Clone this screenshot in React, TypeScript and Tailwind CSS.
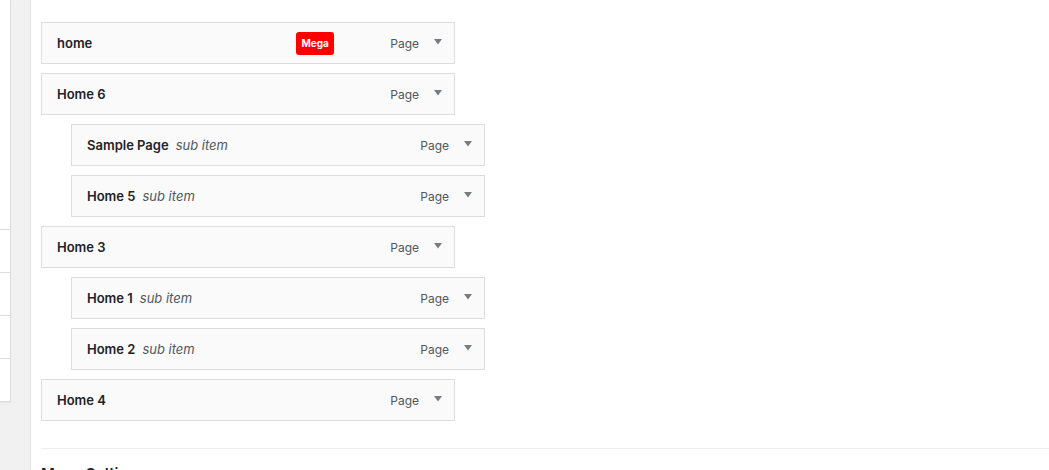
type MenuItem = {
  title: string;
  sub?: boolean;
  mega?: boolean;
};

const items: MenuItem[] = [
  { title: 'home', mega: true },
  { title: 'Home 6' },
  { title: 'Sample Page', sub: true },
  { title: 'Home 5', sub: true },
  { title: 'Home 3' },
  { title: 'Home 1', sub: true },
  { title: 'Home 2', sub: true },
  { title: 'Home 4' },
];

function Arrow() {
  return (
    <svg width="8" height="6" viewBox="0 0 8 6" className="ml-[15px] mt-[-3px]" aria-hidden="true">
      <path d="M0 0 H8 L4 5.5 Z" fill="#787c82" />
    </svg>
  );
}

function ItemRow({ item }: { item: MenuItem }) {
  return (
    <li className={item.sub ? 'pl-[30px]' : ''}>
      <div className="flex h-[42px] w-[414px] items-center border border-[#dddddd] bg-[#fafafa] pl-[15px] pr-[12px] pt-[1px]">
        <span className="text-[13px] font-semibold text-[#1d2327]">{item.title}</span>
        {item.sub && <span className="ml-[7px] text-[13px] italic text-[#50575e]">sub item</span>}
        <div className="ml-auto flex items-center">
          {item.mega && (
            <span className="mr-[56px] flex h-[23px] w-[38px] items-center justify-center rounded-[3px] bg-[#ff0000] text-[10px] font-bold text-white">
              Mega
            </span>
          )}
          <span className="text-[12px] text-[#50575e]">Page</span>
          <Arrow />
        </div>
      </div>
    </li>
  );
}

export default function App() {
  return (
    <div className="flex h-[470px] overflow-hidden bg-[#f1f1f1] font-['Inter',sans-serif]">
      <div className="w-[30px] shrink-0">
        <div className="w-[11px] border-r border-[#dcdcde] bg-white shadow-[0_1px_1px_rgba(0,0,0,0.04)]">
          <div className="h-[230px] border-b border-[#dcdcde]" />
          <div className="h-[43px] border-b border-[#dcdcde]" />
          <div className="h-[43px] border-b border-[#dcdcde]" />
          <div className="h-[43px] border-b border-[#dcdcde]" />
          <div className="h-[43px] border-b border-[#dcdcde]" />
        </div>
      </div>
      <div className="flex-1 border-l border-[#e5e5e5] bg-white pl-[10px] pt-[22px]">
        <ul className="flex flex-col gap-[9px]">
          {items.map((item) => (
            <ItemRow key={item.title} item={item} />
          ))}
        </ul>
        <div className="mt-[27px] border-t border-[#eeeeee] pt-[14px]">
          <h3 className="text-[15px] font-semibold text-[#1d2327]">Menu Settings</h3>
        </div>
      </div>
    </div>
  );
}
